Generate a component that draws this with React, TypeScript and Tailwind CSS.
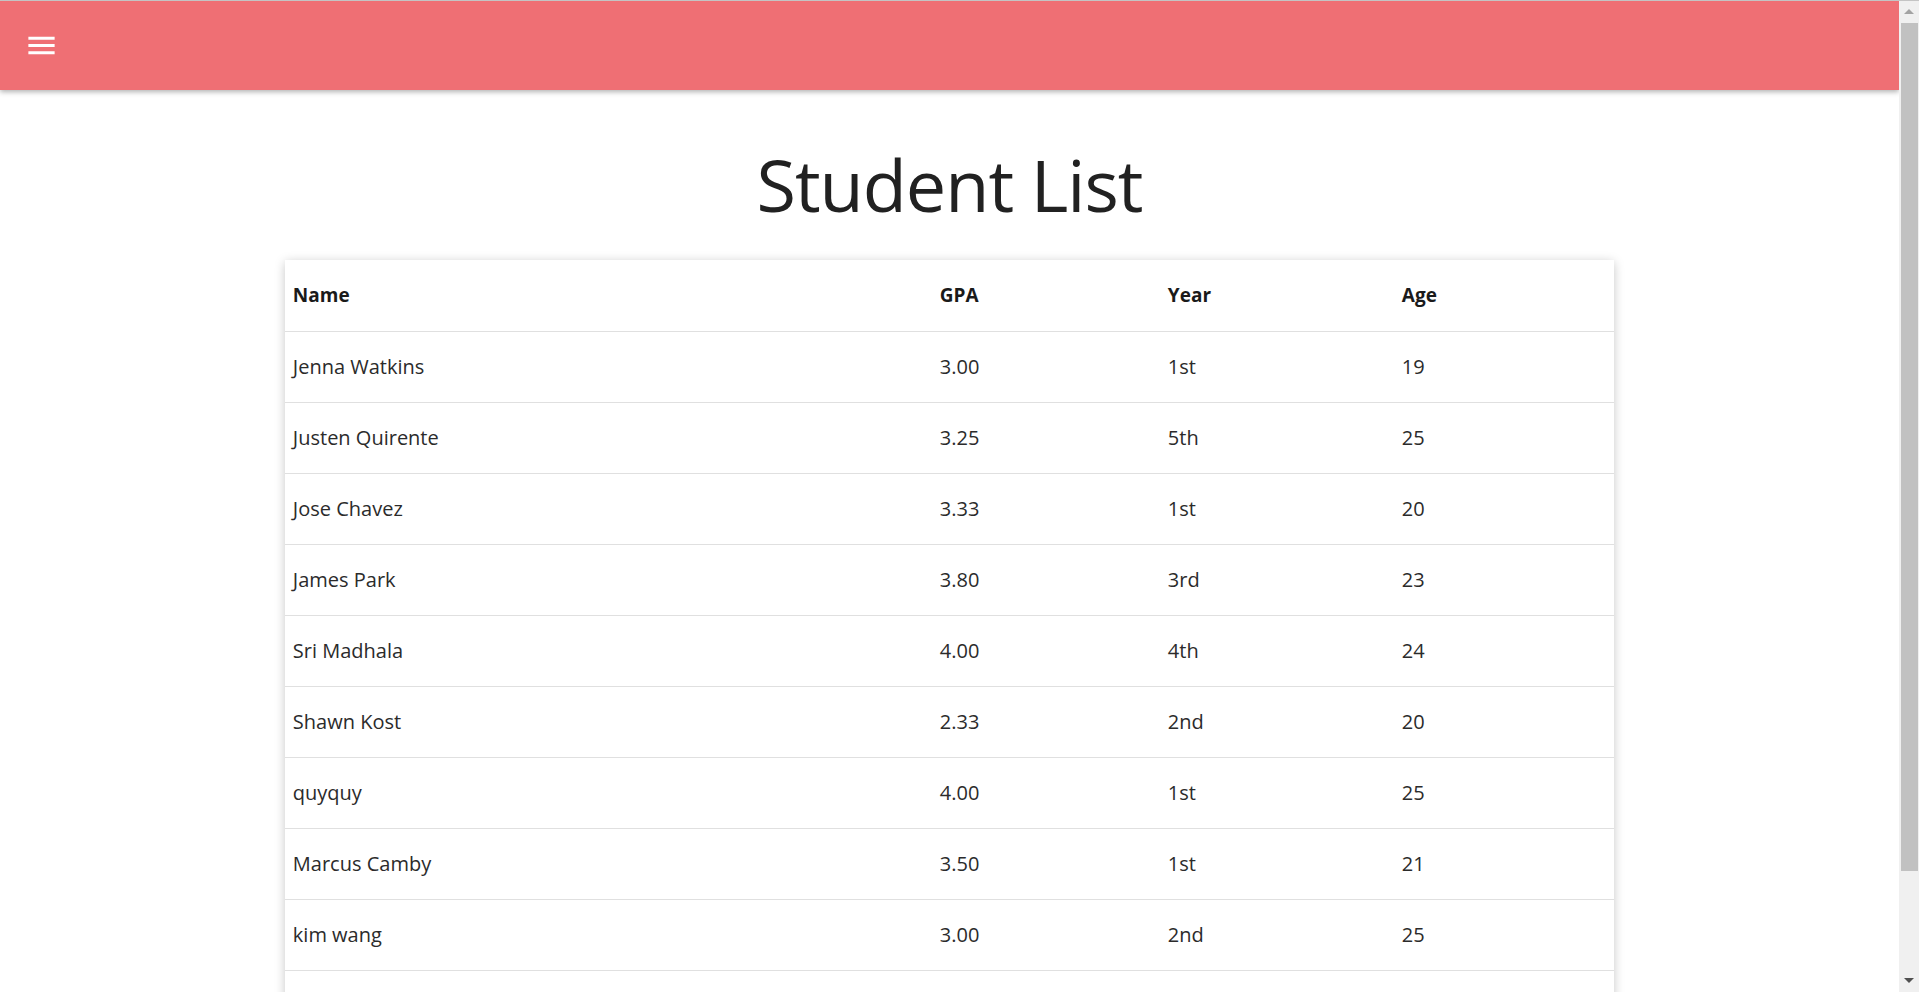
type Student = {
  name: string;
  gpa: string;
  year: string;
  age: number;
};

const students: Student[] = [
  { name: "Jenna Watkins", gpa: "3.00", year: "1st", age: 19 },
  { name: "Justen Quirente", gpa: "3.25", year: "5th", age: 25 },
  { name: "Jose Chavez", gpa: "3.33", year: "1st", age: 20 },
  { name: "James Park", gpa: "3.80", year: "3rd", age: 23 },
  { name: "Sri Madhala", gpa: "4.00", year: "4th", age: 24 },
  { name: "Shawn Kost", gpa: "2.33", year: "2nd", age: 20 },
  { name: "quyquy", gpa: "4.00", year: "1st", age: 25 },
  { name: "Marcus Camby", gpa: "3.50", year: "1st", age: 21 },
  { name: "kim wang", gpa: "3.00", year: "2nd", age: 25 },
  { name: "Dana Lee", gpa: "3.60", year: "3rd", age: 22 },
];

const font = { fontFamily: '"Open Sans", "Noto Sans", sans-serif' };

function MenuIcon() {
  return (
    <svg viewBox="0 0 24 24" width={35} height={35} fill="white">
      <path d="M3 18h18v-2H3v2zm0-5h18v-2H3v2zm0-7v2h18V6H3z" />
    </svg>
  );
}

// the window's scrollbar, as it shows in the screenshot
function ScrollBar() {
  return (
    <div className="w-[20px] shrink-0 bg-[#f0f0f0] flex flex-col items-center">
      <div className="h-[22px] flex items-center justify-center">
        <svg width={10} height={6} viewBox="0 0 10 6">
          <polygon points="5,0 10,5 0,5" fill="#a3a3a3" />
        </svg>
      </div>
      <div className="w-[17px] ml-[1px] h-[848px] bg-[#c1c1c1]" />
      <div className="flex-1" />
      <div className="h-[22px] flex items-center justify-center">
        <svg width={10} height={6} viewBox="0 0 10 6">
          <polygon points="0,0 10,0 5,5" fill="#505050" />
        </svg>
      </div>
    </div>
  );
}

export default function App() {
  return (
    <div className="h-screen flex border-t border-[#c4c4c4] bg-white overflow-hidden" style={font}>
      <main className="flex-1 min-w-0 overflow-hidden">
        <nav className="h-[89px] bg-[#ef6f74] shadow-[0_2px_5px_rgba(0,0,0,0.3)] flex items-center px-6 relative z-10">
          <button aria-label="menu">
            <MenuIcon />
          </button>
        </nav>

        <h1 className="text-center text-[72px] leading-none text-[#212121] pt-[58px] pb-[40px] font-normal tracking-[-1px]">
          Student List
        </h1>

        <div className="w-[70%] mx-auto bg-white shadow-[0_2px_10px_rgba(0,0,0,0.22)] mb-5">
          <table className="w-full border-collapse text-left">
            <colgroup>
              <col className="w-[647px]" />
              <col className="w-[228px]" />
              <col className="w-[234px]" />
              <col />
            </colgroup>
            <thead>
              <tr className="h-[71px] border-b border-[#e0e0e0]">
                <th className="px-2 text-[19px] font-bold text-[#1a1a1a]">Name</th>
                <th className="px-2 text-[19px] font-bold text-[#1a1a1a]">GPA</th>
                <th className="px-2 text-[19px] font-bold text-[#1a1a1a]">Year</th>
                <th className="px-2 text-[19px] font-bold text-[#1a1a1a]">Age</th>
              </tr>
            </thead>
            <tbody>
              {students.map((s) => (
                <tr key={s.name} className="h-[71px] border-b border-[#e0e0e0] text-[20px] text-[#2b2b2b]">
                  <td className="px-2">{s.name}</td>
                  <td className="px-2">{s.gpa}</td>
                  <td className="px-2">{s.year}</td>
                  <td className="px-2">{s.age}</td>
                </tr>
              ))}
            </tbody>
          </table>
        </div>
      </main>
      <ScrollBar />
    </div>
  );
}
